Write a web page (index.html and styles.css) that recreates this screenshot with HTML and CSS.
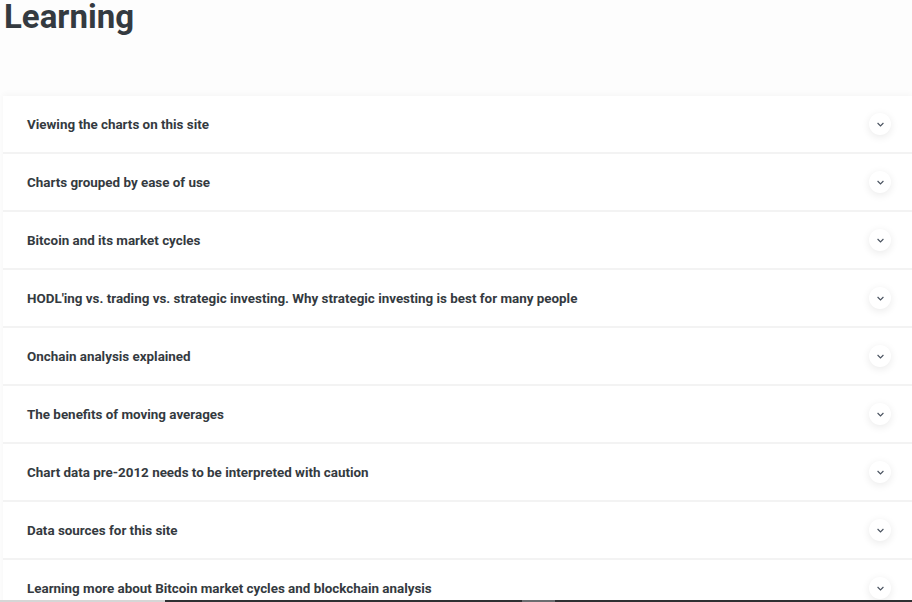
FILE: index.html
```html
<!DOCTYPE html>
<html lang="en">
<head>
    <meta charset="UTF-8">
    <meta name="viewport" content="width=device-width, initial-scale=1.0">
    <title>Learning</title>
    <link rel="stylesheet" href="styles.css">
</head>
<body>
    <h1 class="page-title">Learning</h1>

    <div class="accordion">
        <div class="acc-item">
            <span class="acc-title">Viewing the charts on this site</span>
            <button class="acc-toggle"><svg viewBox="0 0 10 6"><path d="M1.5 1.2 5 4.6 8.5 1.2"/></svg></button>
        </div>
        <div class="acc-item">
            <span class="acc-title">Charts grouped by ease of use</span>
            <button class="acc-toggle"><svg viewBox="0 0 10 6"><path d="M1.5 1.2 5 4.6 8.5 1.2"/></svg></button>
        </div>
        <div class="acc-item">
            <span class="acc-title">Bitcoin and its market cycles</span>
            <button class="acc-toggle"><svg viewBox="0 0 10 6"><path d="M1.5 1.2 5 4.6 8.5 1.2"/></svg></button>
        </div>
        <div class="acc-item">
            <span class="acc-title">HODL'ing vs. trading vs. strategic investing. Why strategic investing is best for many people</span>
            <button class="acc-toggle"><svg viewBox="0 0 10 6"><path d="M1.5 1.2 5 4.6 8.5 1.2"/></svg></button>
        </div>
        <div class="acc-item">
            <span class="acc-title">Onchain analysis explained</span>
            <button class="acc-toggle"><svg viewBox="0 0 10 6"><path d="M1.5 1.2 5 4.6 8.5 1.2"/></svg></button>
        </div>
        <div class="acc-item">
            <span class="acc-title">The benefits of moving averages</span>
            <button class="acc-toggle"><svg viewBox="0 0 10 6"><path d="M1.5 1.2 5 4.6 8.5 1.2"/></svg></button>
        </div>
        <div class="acc-item">
            <span class="acc-title">Chart data pre-2012 needs to be interpreted with caution</span>
            <button class="acc-toggle"><svg viewBox="0 0 10 6"><path d="M1.5 1.2 5 4.6 8.5 1.2"/></svg></button>
        </div>
        <div class="acc-item">
            <span class="acc-title">Data sources for this site</span>
            <button class="acc-toggle"><svg viewBox="0 0 10 6"><path d="M1.5 1.2 5 4.6 8.5 1.2"/></svg></button>
        </div>
        <div class="acc-item">
            <span class="acc-title">Learning more about Bitcoin market cycles and blockchain analysis</span>
            <button class="acc-toggle"><svg viewBox="0 0 10 6"><path d="M1.5 1.2 5 4.6 8.5 1.2"/></svg></button>
        </div>
    </div>

    <!-- bottom scroll track -->
    <div class="scrollbar">
        <div class="track-start"></div>
        <div class="thumb"></div>
        <div class="thumb-gap"></div>
        <div class="thumb"></div>
    </div>
</body>
</html>
```

FILE: styles.css
```css
html, body {
    margin: 0;
    padding: 0;
    height: 602px;
    overflow: hidden;
}

body {
    font-family: Roboto, "Liberation Sans", sans-serif;
    color: #343a40;
    background: #fdfdfd;
}

.page-title {
    margin: 0;
    padding: 0 0 0 4px;
    font-size: 33px;
    font-weight: 700;
    line-height: 33px;
    color: #343a40;
}

.accordion {
    margin: 63px 0 0 3px;
    background: #fff;
    box-shadow: 0 -2px 6px rgba(0, 0, 0, 0.03);
}

.acc-item {
    display: flex;
    align-items: center;
    justify-content: space-between;
    height: 56px;
    padding: 0 21px 0 24px;
    border-bottom: 2px solid #f3f3f3;
}

.acc-title {
    font-size: 13.4px;
    font-weight: 700;
    color: #343a40;
}

.acc-toggle {
    display: flex;
    align-items: center;
    justify-content: center;
    width: 22px;
    height: 22px;
    padding: 0;
    border: none;
    border-radius: 50%;
    background: #fff;
    box-shadow: 0 2px 8px rgba(0, 0, 0, 0.09);
    cursor: pointer;
}

.acc-toggle svg {
    width: 9px;
    height: 5px;
    fill: none;
    stroke: #4a5360;
    stroke-width: 1.4;
}

.scrollbar {
    position: absolute;
    left: 0;
    right: 0;
    top: 600px;
    height: 2px;
    display: flex;
    background: #cfcfcf;
}

.track-start {
    width: 165px;
    background: #d6d6d6;
}

.thumb {
    flex: 1;
    background: #2f3133;
}

.thumb-gap {
    width: 33px;
    background: #6b6d70;
}
```
